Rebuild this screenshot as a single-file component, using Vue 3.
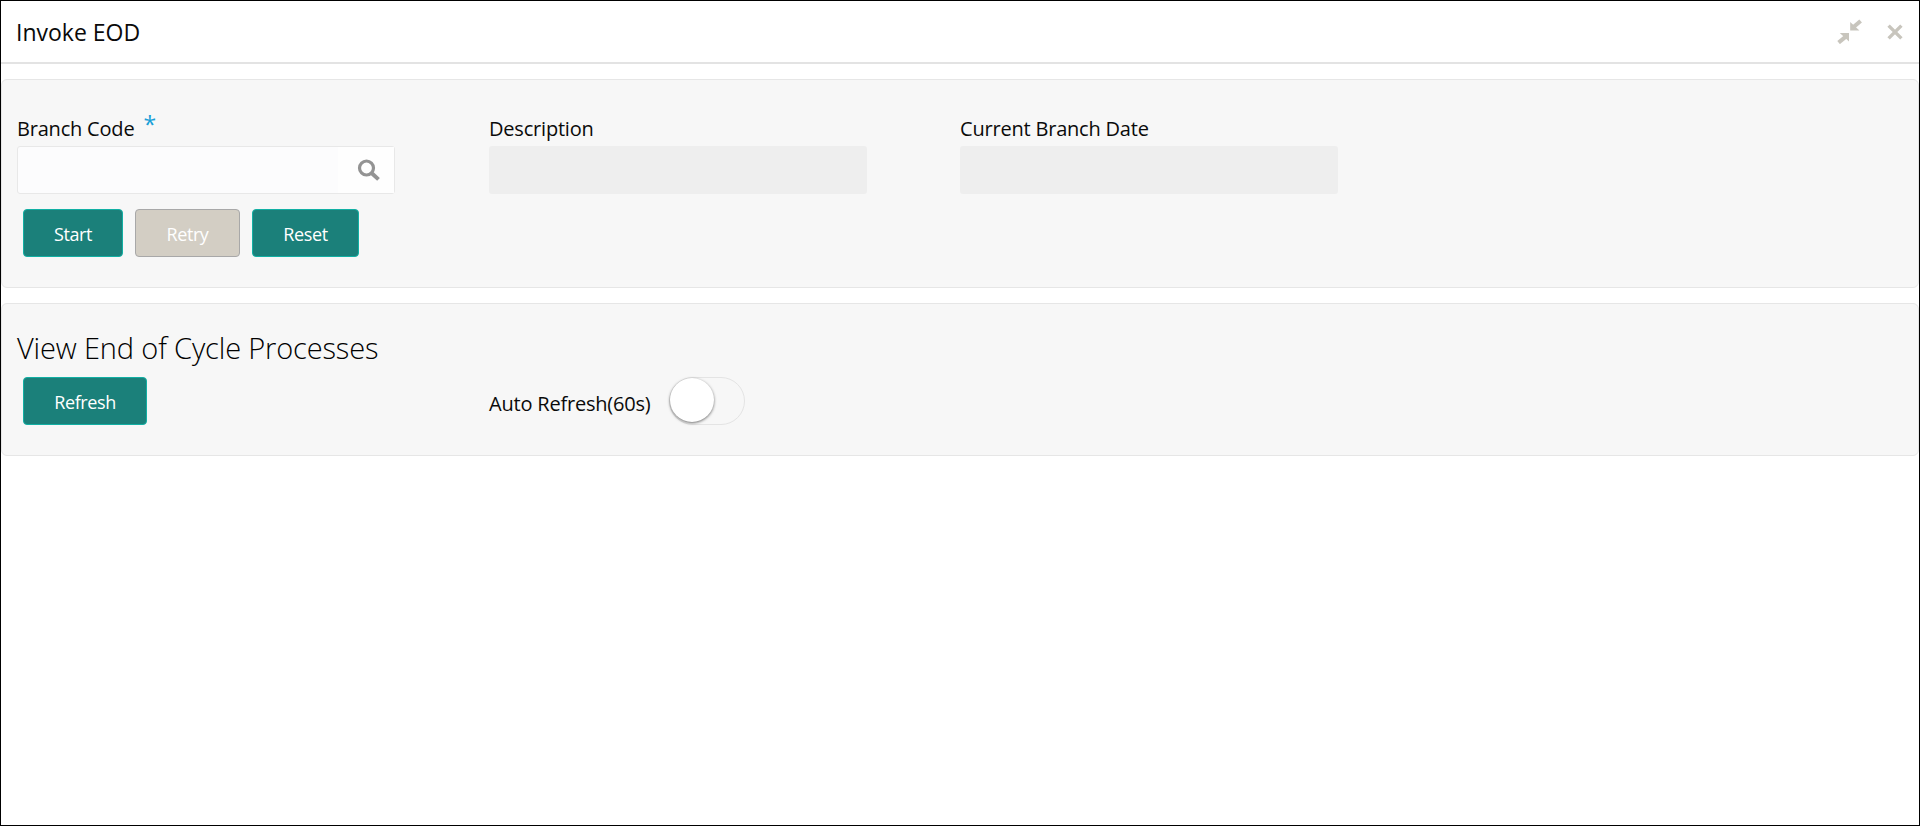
<script setup>
const columns = [
  { label: 'Description' },
  { label: 'Current Branch Date' },
]
</script>

<template>
  <div class="window">
    <header class="head">
      <h1 class="title">Invoke EOD</h1>
      <div class="head-icons">
        <svg class="ico-min" viewBox="0 0 25 25" width="25" height="25">
          <path d="M13.2 3 L13.2 11.6 L22.4 11.6 Z" fill="#c8c5bd" />
          <path d="M16 8.6 L23.6 2" stroke="#c8c5bd" stroke-width="4" fill="none" />
          <path d="M12 14 L2.8 14 L12 22.6 Z" fill="#c8c5bd" />
          <path d="M8.8 17.6 L1.6 23.6" stroke="#c8c5bd" stroke-width="4" fill="none" />
        </svg>
        <svg class="ico-close" viewBox="0 0 16 16" width="16" height="16">
          <path d="M1.6 1.6 L14.4 14.4 M14.4 1.6 L1.6 14.4" stroke="#c8c5bd" stroke-width="3.4" fill="none" />
        </svg>
      </div>
    </header>

    <section class="panel panel-top">
      <div class="fields">
        <div class="field field-first">
          <label class="label">Branch Code <span class="req">*</span></label>
          <div class="input input-search">
            <span class="search-zone">
              <svg viewBox="0 0 24 22" width="24" height="22" fill="none">
                <circle cx="9.5" cy="9" r="7" stroke="#939393" stroke-width="3.2" />
                <path d="M14.8 14.2 L21.5 20.4" stroke="#939393" stroke-width="4" />
              </svg>
            </span>
          </div>
        </div>
        <div v-for="c in columns" :key="c.label" class="field">
          <label class="label">{{ c.label }}</label>
          <div class="input input-off"></div>
        </div>
      </div>
      <div class="actions">
        <button class="btn btn-start">Start</button>
        <button class="btn btn-retry" disabled>Retry</button>
        <button class="btn btn-reset">Reset</button>
      </div>
    </section>

    <section class="panel panel-bottom">
      <h2 class="sub">View End of Cycle Processes</h2>
      <div class="refresh-row">
        <div class="refresh-cell">
          <button class="btn btn-refresh">Refresh</button>
        </div>
        <div class="auto">
          <span class="auto-label">Auto Refresh(60s)</span>
          <span class="switch"><span class="knob"></span></span>
        </div>
      </div>
    </section>
  </div>
</template>

<style>
html, body { margin: 0; background: #fff; }
</style>

<style scoped>
.window {
  box-sizing: border-box;
  width: 1920px;
  height: 826px;
  border: 1px solid #000;
  background: #fff;
  font-family: "Open Sans", "Noto Sans", sans-serif;
  color: #0a0a0a;
  overflow: hidden;
}
.head {
  box-sizing: border-box;
  height: 63px;
  border-bottom: 2px solid #e3e3e3;
  display: flex;
  align-items: center;
  justify-content: space-between;
  padding: 0 16px 0 15px;
}
.title {
  margin: 0;
  font-size: 23px;
  font-weight: 400;
}
.head-icons {
  display: flex;
  align-items: center;
  gap: 25px;
}
.panel {
  box-sizing: border-box;
  background: #f7f7f7;
  border: 1px solid #e6e6e6;
  border-radius: 6px;
}
.panel-top {
  height: 209px;
  margin-top: 15px;
  padding: 31px 15px 0;
}
.panel-bottom {
  height: 153px;
  margin-top: 15px;
  padding: 20px 15px 0;
}
.fields {
  display: flex;
  gap: 93px;
}
.field {
  width: 378px;
}
.field-first {
  margin-right: 1px;
}
.label {
  display: block;
  height: 35px;
  font-size: 20px;
  line-height: 35px;
  letter-spacing: -0.2px;
  white-space: nowrap;
}
.req {
  color: #1a9fd8;
  font-size: 23px;
  line-height: 20px;
  margin-left: 4px;
  vertical-align: 3px;
}
.input {
  box-sizing: border-box;
  height: 48px;
  border-radius: 3px;
}
.input-search {
  background: #fcfcfd;
  border: 1px solid #e8e8e8;
  display: flex;
  justify-content: flex-end;
}
.search-zone {
  box-sizing: border-box;
  width: 56px;
  background: #fefefe;
  display: flex;
  align-items: center;
  justify-content: flex-end;
  padding-right: 13px;
}
.input-off {
  background: #eeeeee;
}
.actions {
  display: flex;
  gap: 12px;
  margin-top: 15px;
  padding-left: 6px;
}
.btn {
  box-sizing: border-box;
  height: 48px;
  border-radius: 4px;
  color: #fff;
  background: #1b807a;
  border: 1px solid #12b0a4;
  font-family: inherit;
  font-size: 18px;
  letter-spacing: -0.4px;
  padding: 2px 0 0;
}
.btn-start { width: 100px; }
.btn-retry {
  width: 105px;
  background: #d3cec4;
  border-color: #a8a8a8;
}
.btn-reset { width: 107px; }
.btn-refresh { width: 124px; }
.sub {
  margin: 0 0 5px;
  font-size: 29px;
  line-height: 48px;
  font-weight: 300;
  letter-spacing: -0.15px;
  color: #000;
}
.refresh-row {
  display: flex;
}
.refresh-cell {
  width: 472px;
  padding-left: 6px;
  box-sizing: border-box;
}
.auto {
  display: flex;
  align-items: center;
  gap: 18px;
  height: 48px;
}
.auto-label {
  font-size: 20px;
  letter-spacing: -0.2px;
  padding-top: 5px;
}
.switch {
  box-sizing: border-box;
  width: 76px;
  height: 48px;
  border: 1px solid #e4e4e4;
  border-radius: 24px;
  position: relative;
  display: block;
}
.knob {
  position: absolute;
  left: 0;
  top: 0;
  width: 44px;
  height: 44px;
  border-radius: 50%;
  background: #fff;
  box-shadow: 0 1px 3px rgba(0, 0, 0, 0.55);
}
</style>
